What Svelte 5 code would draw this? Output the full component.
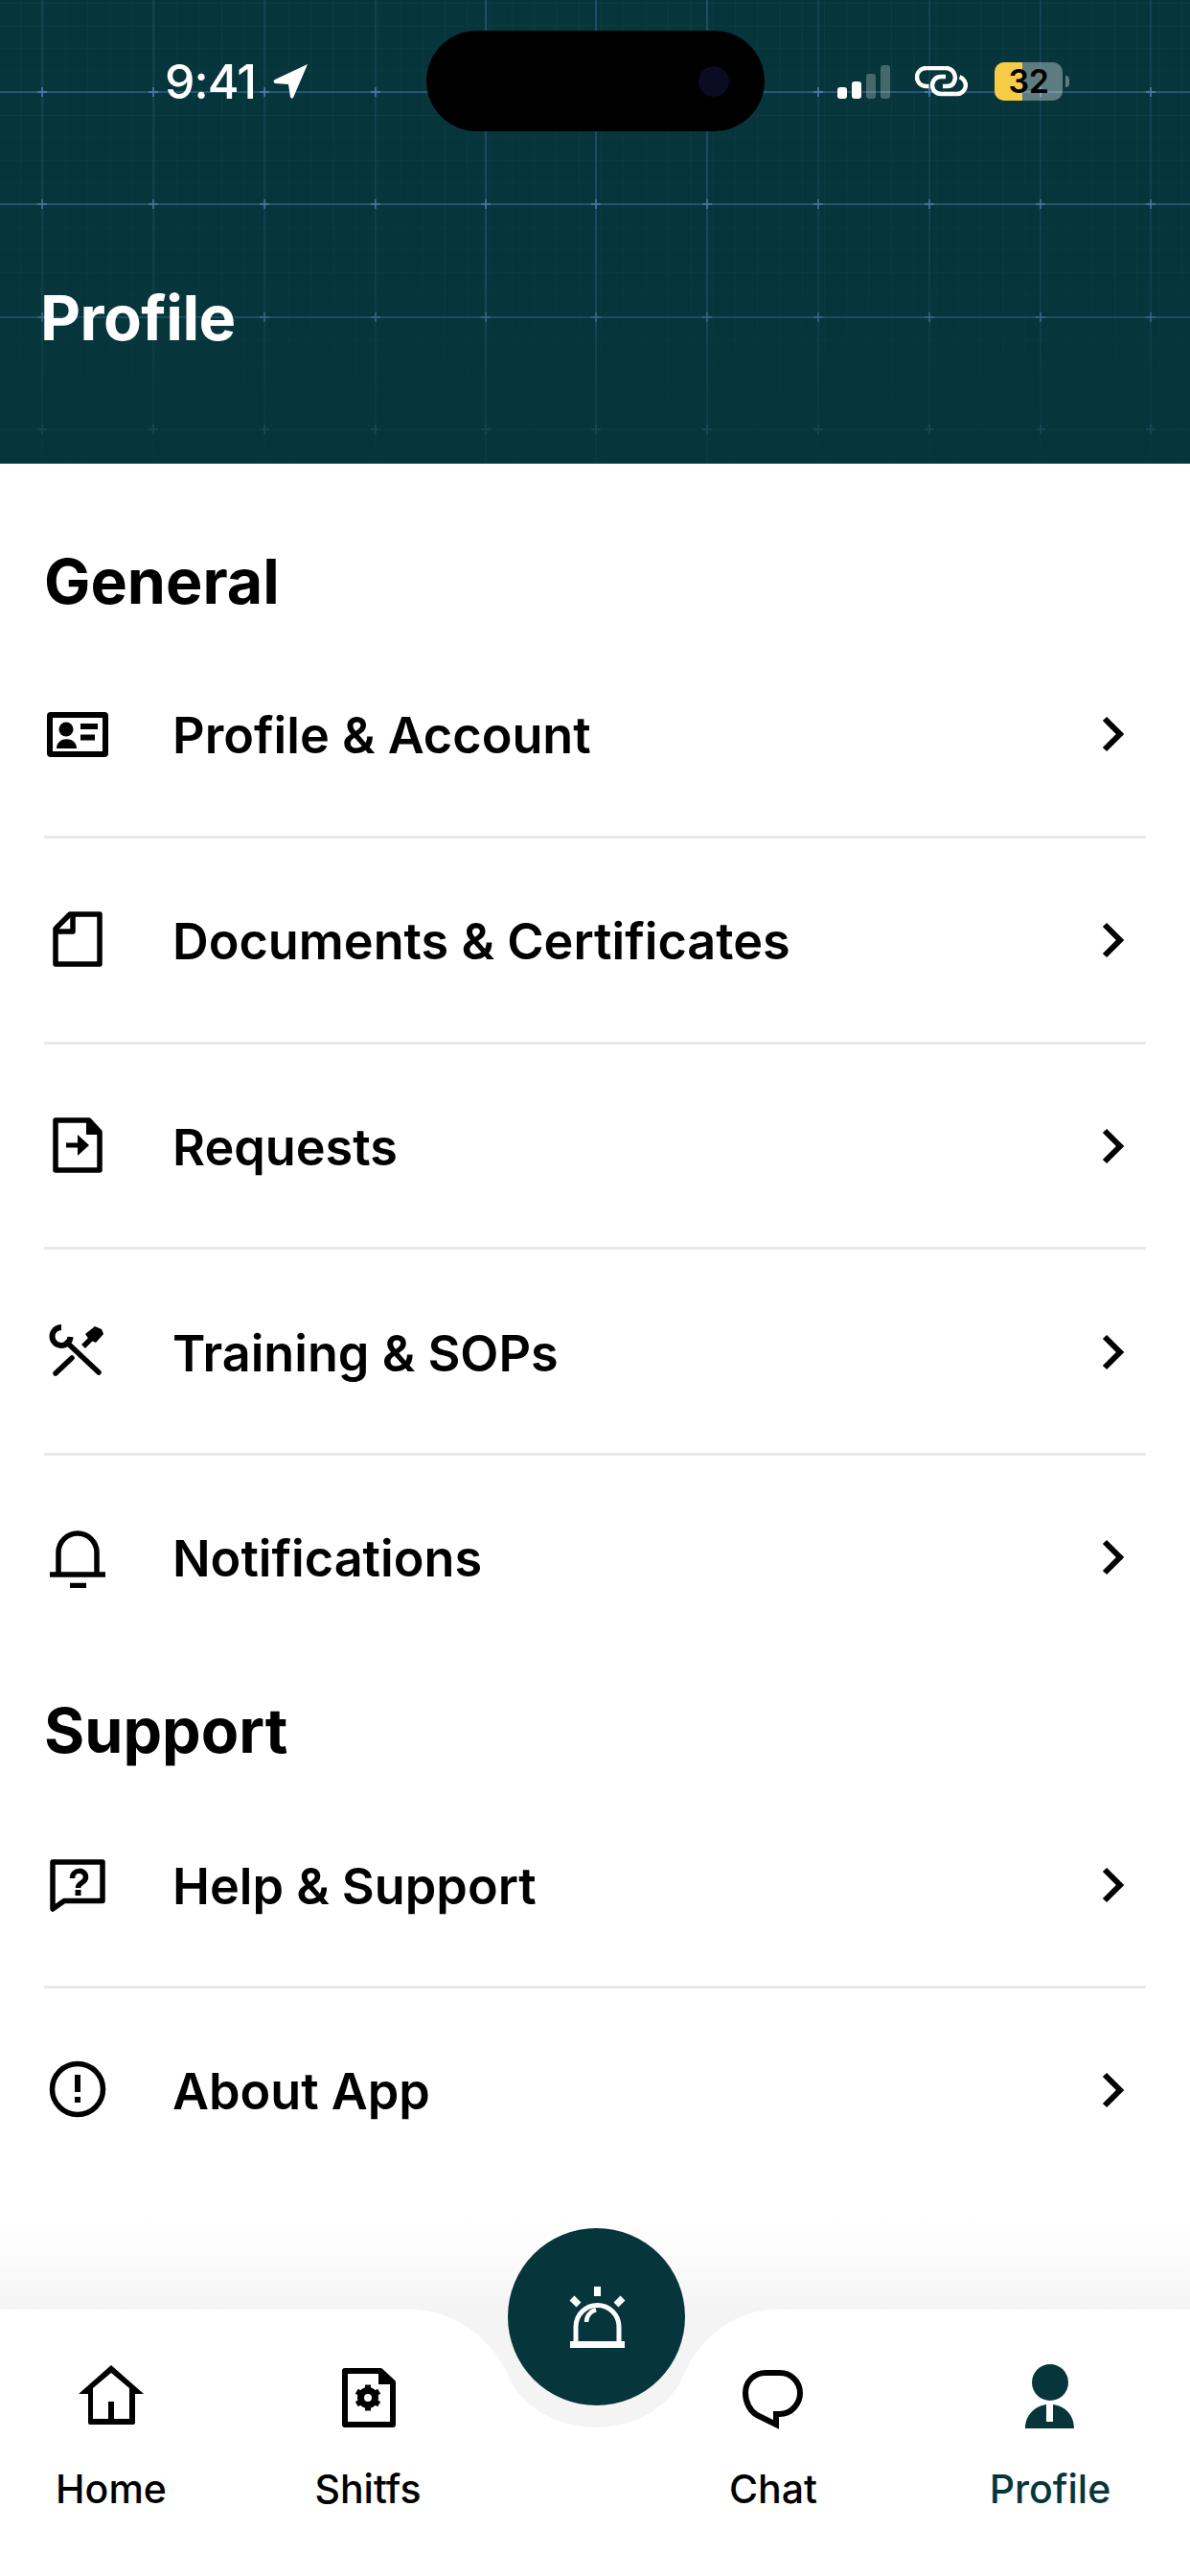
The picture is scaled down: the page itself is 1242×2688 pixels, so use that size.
<script>
  const general = [
    { label: 'Profile & Account', icon: 'card' },
    { label: 'Documents & Certificates', icon: 'doc' },
    { label: 'Requests', icon: 'request' },
    { label: 'Training & SOPs', icon: 'tools' },
    { label: 'Notifications', icon: 'bell' },
  ];
  const support = [
    { label: 'Help & Support', icon: 'help' },
    { label: 'About App', icon: 'about' },
  ];
  const tabs = [
    { label: 'Home', icon: 'home', x: 116 },
    { label: 'Shitfs', icon: 'shifts', x: 384 },
    { label: 'Chat', icon: 'chat', x: 807 },
    { label: 'Profile', icon: 'person', x: 1096, active: true },
  ];
  const majorX = [44, 160, 276, 392, 507, 622, 738, 854, 970, 1086, 1201];
  const majorY = [96, 213, 331, 448];
  const teeth = [0, 60, 120, 180, 240, 300];
</script>

{#snippet icon(name)}
  <svg class="row-icon" viewBox="0 0 68 64" fill="none" stroke="#000" stroke-width="5.5">
    {#if name === 'card'}
      <rect x="4" y="12" width="58" height="41" rx="1" stroke-width="6" />
      <circle cx="21" cy="27" r="7.5" fill="#000" stroke="none" />
      <path d="M11 47c0-13 21-13 21 0z" fill="#000" stroke="none" />
      <path d="M36 24h18M36 35.5h15" stroke-width="6" />
    {:else if name === 'doc'}
      <path d="M25 5H56V57H10V20z" stroke-linejoin="round" />
      <path d="M28 5V23H10" stroke-linejoin="round" />
    {:else if name === 'request'}
      <path d="M10 5H45L56 17V57H10z" stroke-linejoin="round" />
      <path d="M42 5L58 20H42z" fill="#000" stroke="none" />
      <path d="M21 28.5H33V20L45 31 33 42V33.5H21z" fill="#000" stroke="none" />
    {:else if name === 'tools'}
      <path d="M16 6A9.5 9.5 0 1 0 25.5 16" stroke-width="6" />
      <path d="M22 22L55 53" stroke-linecap="round" />
      <path d="M41 13L51 5 58 8 60 13 52 22 45 19z" fill="#000" stroke="none" />
      <path d="M47 18L39 26" />
      <path d="M27 38L10 54" stroke-linecap="round" />
    {:else if name === 'bell'}
      <path d="M13 48V27a20 20 0 0 1 40 0V48" />
      <path d="M4 50H62M25 61.5H42" />
    {:else if name === 'help'}
      <path d="M7 8H59V48.5H19L7 57z" stroke-linejoin="round" />
      <path d="M27.5 25c0-10 14-10 14-1 0 6-8 5-8 11" />
      <path d="M33.5 37v6" stroke-width="6" />
    {:else if name === 'about'}
      <circle cx="33" cy="31" r="26.5" />
      <path d="M33 16v18M33 39v6" stroke-width="6" />
    {/if}
  </svg>
{/snippet}

{#snippet tabIcon(name)}
  <svg class="tab-icon" viewBox="0 0 72 72" fill="none" stroke="#000" stroke-width="6">
    {#if name === 'home'}
      <path
        d="M36 4L70 34H61V64Q61 66 59 66H14Q12 66 12 64V34H2ZM36 12L17 28V60H33V42H39V60H55V28Z"
        fill="#000"
        fill-rule="evenodd"
        stroke="none"
      />
    {:else if name === 'shifts'}
      <path d="M12 10H49L62 22V66H12z" stroke-linejoin="round" />
      <path d="M47 8L65 24H47z" fill="#000" stroke="none" />
      <circle cx="36" cy="38" r="7.5" stroke-width="7" />
      {#each teeth as a}
        <path d="M36 24.5V29" stroke-width="6" transform="rotate({a} 36 38)" />
      {/each}
    {:else if name === 'chat'}
      <path d="M28 12h15c12 0 21 10 21 21s-9 22-21 22h-4v11L19 56C12 52 7 43 7 33 7 21 16 12 28 12z" />
    {:else if name === 'person'}
      <circle cx="36" cy="22" r="19" fill="#06363b" stroke="none" />
      <path d="M10 70C10 56 20 47 32 45V63H39V45C52 47 61 56 61 70z" fill="#06363b" stroke="none" />
    {/if}
  </svg>
{/snippet}

{#snippet chevron()}
  <svg class="chevron" viewBox="0 0 24 38" fill="none" stroke="#000" stroke-width="6">
    <path d="M3 3l16 16L3 35" />
  </svg>
{/snippet}

<div class="page">
  <header class="hero">
    <svg class="grid" width="1242" height="484">
      <defs>
        <pattern id="minor" width="23.3" height="23.4" x="-2" y="3" patternUnits="userSpaceOnUse">
          <path d="M0 0H23.3M0 0V23.4" stroke="#2a6274" stroke-width="1" fill="none" opacity="0.28" />
        </pattern>
        <linearGradient id="fade" x1="0" y1="0" x2="0" y2="1">
          <stop offset="0" stop-color="#fff" />
          <stop offset="0.6" stop-color="#fff" stop-opacity="0.75" />
          <stop offset="1" stop-color="#fff" stop-opacity="0.12" />
        </linearGradient>
        <mask id="fader"><rect width="1242" height="484" fill="url(#fade)" /></mask>
      </defs>
      <g mask="url(#fader)">
        <rect width="1242" height="484" fill="url(#minor)" />
        {#each majorX as x, i}
          <path d="M{x} 0V484" stroke="#3b6594" stroke-width="1.5" opacity={i > 3 && i < 7 ? 0.7 : 0.35} />
        {/each}
        {#each majorY as y, i}
          <path d="M0 {y}H1242" stroke="#3f6a9c" stroke-width={i === 3 ? 1 : 2} opacity={i === 3 ? 0.35 : 0.65} />
        {/each}
        {#each majorY as y}
          {#each majorX as x}
            <path d="M{x - 5} {y}h10M{x} {y - 5}v10" stroke="#5f8cc8" stroke-width="2" opacity="0.7" />
          {/each}
        {/each}
      </g>
    </svg>

    <div class="status">
      <div class="time">
        <span>9:41</span>
        <svg class="arrow" viewBox="0 0 36 36">
          <path d="M36 0L21 35Q19 37 18 34L16 21 2 20Q-1 18 2 16z" fill="#fff" />
        </svg>
      </div>
      <div class="island"><span class="camera"></span></div>
      <div class="indicators">
        <div class="signal">
          <i class="on h1"></i><i class="on h2"></i><i class="h3"></i><i class="h4"></i>
        </div>
        <svg class="link" viewBox="0 0 56 32" fill="none" stroke="#fff" stroke-width="4.5">
          <path d="M14.5 21H11.5a9.5 9.5 0 0 1 0-19H32a10 10 0 0 1 9 14c-1 3-4 5-8 5H29" />
          <path d="M32 11H27a9 9 0 0 0 0 18H44a9 9 0 0 0 2.5-17.6" />
        </svg>
        <div class="battery"><span class="level"></span><span class="num">32</span></div>
        <span class="nub"></span>
      </div>
    </div>

    <h1>Profile</h1>
  </header>

  <main>
    <h2 class="first">General</h2>
    {#each general as item, i}
      {#if i > 0}<hr />{/if}
      <div class="row">
        {@render icon(item.icon)}
        <span class="label">{item.label}</span>
        {@render chevron()}
      </div>
    {/each}

    <h2 class="second">Support</h2>
    {#each support as item, i}
      {#if i > 0}<hr />{/if}
      <div class="row">
        {@render icon(item.icon)}
        <span class="label">{item.label}</span>
        {@render chevron()}
      </div>
    {/each}
  </main>

  <nav>
    <svg class="nav-bg" width="1242" height="378" viewBox="0 2310 1242 378">
      <defs>
        <linearGradient id="shade" x1="0" y1="0" x2="0" y2="1">
          <stop offset="0" stop-color="#fff" />
          <stop offset="0.5" stop-color="#fbfbfb" />
          <stop offset="1" stop-color="#f4f4f4" />
        </linearGradient>
      </defs>
      <rect y="2310" width="1242" height="100" fill="url(#shade)" />
      <path d="M0 2410H432V2688H0zM812 2410H1242V2688H812zM432 2540H812V2688H432z" fill="#fff" />
      <path
        d="M432 2410C470 2412 505 2432 528 2473C540 2510 580 2533 622 2533C665 2533 703 2510 716 2473C738 2430 775 2410 812 2410z"
        fill="#f4f4f4"
      />
      <path
        d="M432 2410L432 2540H812V2410C775 2410 738 2430 716 2473C703 2510 665 2533 622 2533C580 2533 540 2510 528 2473C505 2432 470 2412 432 2410z"
        fill="#fff"
      />
    </svg>

    <button class="fab" aria-label="Alert">
      <svg viewBox="0 0 60 64" fill="none" stroke="#fff" stroke-width="5">
        <path d="M30.5 0v10M4 12l7 7M57 12l-7 7" stroke-width="7" />
        <path d="M2 60.5h57" stroke-width="7" />
        <path d="M8 58V42a22.5 22.5 0 0 1 45 0v16" />
        <path d="M19 37c0-6 4-11 10-13" stroke-width="4.5" />
      </svg>
    </button>

    {#each tabs as tab}
      <div class="tab" class:active={tab.active} style="left: {tab.x}px">
        {@render tabIcon(tab.icon)}
        <span>{tab.label}</span>
      </div>
    {/each}
  </nav>
</div>

<style>
  :global(body) {
    margin: 0;
    background: #fff;
  }

  .page {
    position: relative;
    width: 1242px;
    height: 2688px;
    overflow: hidden;
    display: flex;
    flex-direction: column;
    font-family: Inter, 'Liberation Sans', sans-serif;
    color: #000;
  }

  .hero {
    position: relative;
    flex: none;
    height: 484px;
    box-sizing: border-box;
    background: #06363b;
    border-bottom: 1px solid #2f6467;
  }

  .grid {
    position: absolute;
    inset: 0;
  }

  .status {
    position: relative;
    display: flex;
    align-items: center;
    height: 105px;
    padding-top: 32px;
  }

  .time {
    display: flex;
    align-items: center;
    width: 445px;
    box-sizing: border-box;
    padding-left: 172px;
    color: #fff;
    font-size: 50px;
    font-weight: 500;
    letter-spacing: -1px;
  }

  .arrow {
    width: 36px;
    height: 36px;
    margin-left: 18px;
  }

  .island {
    position: relative;
    width: 353px;
    height: 105px;
    border-radius: 53px;
    background: #000;
  }

  .camera {
    position: absolute;
    left: 284px;
    top: 37px;
    width: 32px;
    height: 32px;
    border-radius: 50%;
    background: #0b0b24;
  }

  .indicators {
    display: flex;
    align-items: center;
    margin-left: 76px;
  }

  .signal {
    display: flex;
    align-items: flex-end;
    gap: 5px;
    height: 35px;
    margin-top: 1px;
  }

  .signal i {
    display: block;
    width: 10px;
    border-radius: 3px;
    background: rgba(255, 255, 255, 0.25);
  }

  .signal .on {
    background: #fff;
  }

  .h1 { height: 12px; }
  .h2 { height: 18px; }
  .h3 { height: 26px; }
  .h4 { height: 35px; }

  .link {
    width: 56px;
    height: 32px;
    margin-left: 26px;
  }

  .battery {
    position: relative;
    width: 71px;
    height: 40px;
    margin-left: 27px;
    border-radius: 10px;
    overflow: hidden;
    background: rgba(255, 255, 255, 0.35);
    display: flex;
    align-items: center;
    justify-content: center;
  }

  .level {
    position: absolute;
    left: 0;
    top: 0;
    bottom: 0;
    width: 29px;
    background: #f8cb46;
  }

  .num {
    position: relative;
    font-size: 34px;
    font-weight: 600;
    color: #000;
    letter-spacing: -0.5px;
  }

  .nub {
    width: 4px;
    height: 12px;
    margin-left: 3px;
    border-radius: 0 6px 6px 0;
    background: rgba(255, 255, 255, 0.35);
  }

  h1 {
    position: relative;
    margin: 155px 0 0 42px;
    font-size: 65px;
    line-height: 80px;
    font-weight: 700;
    color: #fff;
    letter-spacing: -0.5px;
  }

  main {
    flex: 1;
    padding: 0 46px;
  }

  h2 {
    margin: 0;
    font-size: 64.5px;
    line-height: 80px;
    font-weight: 700;
  }

  h2.first {
    margin: 83px 0 12px;
  }

  h2.second {
    margin: 33px 0 13.5px;
  }

  .row {
    display: flex;
    align-items: center;
    height: 214.75px;
  }

  .row-icon {
    flex: none;
    width: 68px;
    height: 64px;
    margin-left: 2px;
  }

  .label {
    flex: 1;
    margin-left: 64px;
    padding-top: 2px;
    font-size: 52.2px;
    font-weight: 600;
  }

  .chevron {
    flex: none;
    width: 24px;
    height: 38px;
    margin-right: 22px;
  }

  hr {
    margin: -2px 0 -1px;
    border: 0;
    height: 3px;
    background: #e9e9e9;
  }

  nav {
    position: absolute;
    left: 0;
    right: 0;
    bottom: 0;
    height: 378px;
  }

  .nav-bg {
    position: absolute;
    inset: 0;
  }

  .fab {
    position: absolute;
    left: 530px;
    top: 15px;
    width: 185px;
    height: 185px;
    padding: 0;
    border: 0;
    border-radius: 50%;
    background: #06363b;
    display: flex;
    align-items: center;
    justify-content: center;
  }

  .fab svg {
    width: 60px;
    height: 64px;
  }

  .tab {
    position: absolute;
    top: 154px;
    width: 200px;
    margin-left: -100px;
    display: flex;
    flex-direction: column;
    align-items: center;
    font-size: 41px;
    font-weight: 500;
  }

  .tab span {
    margin-top: 36px;
    line-height: 50px;
  }

  .tab-icon {
    width: 72px;
    height: 72px;
  }

  .active {
    color: #06363b;
  }
</style>
